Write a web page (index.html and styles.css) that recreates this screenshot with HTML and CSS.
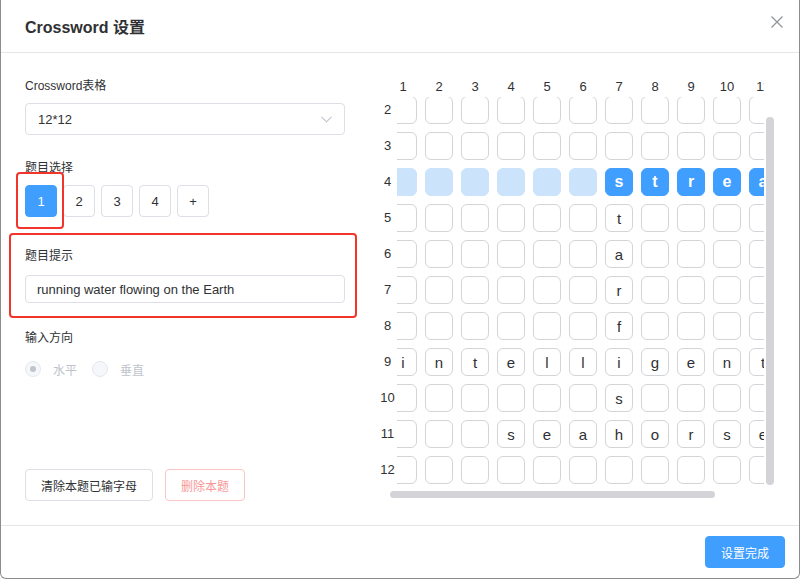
FILE: index.html
```html
<!DOCTYPE html>
<html lang="zh">
<head>
<meta charset="utf-8">
<title>Crossword 设置</title>
<link rel="stylesheet" href="styles.css">
</head>
<body>
<div class="dialog">
  <div class="header">
    <span class="title">Crossword 设置</span>
    <svg class="close" width="12" height="12" viewBox="0 0 12 12"><path d="M0.5 0.5L11.5 11.5M11.5 0.5L0.5 11.5" stroke="#909399" stroke-width="1.2" fill="none"/></svg>
  </div>
  <div class="body">
    <div class="left">
      <div class="label first">Crossword表格</div>
      <div class="select"><span>12*12</span><svg width="11" height="7" viewBox="0 0 11 7"><path d="M0.5 0.8L5.5 5.8L10.5 0.8" stroke="#c0c4cc" stroke-width="1.1" fill="none"/></svg></div>
      <div class="label l2">题目选择</div>
      <div class="nums">
        <span class="num active">1</span><span class="num">2</span><span class="num">3</span><span class="num">4</span><span class="num">+</span>
      </div>
      <div class="label l3">题目提示</div>
      <div class="input">running water flowing on the Earth</div>
      <div class="label l4">输入方向</div>
      <div class="radios">
        <span class="radio checked"><i></i>水平</span>
        <span class="radio"><i></i>垂直</span>
      </div>
      <div class="actions">
        <span class="btn">清除本题已输字母</span>
        <span class="btn danger">删除本题</span>
      </div>
    </div>
    <div class="grid-panel">
      <div class="col-head">
        <div class="corner"></div>
        <div class="col-clip">
          <div class="col-track">
            <span>1</span><span>2</span><span>3</span><span>4</span><span>5</span><span>6</span><span>7</span><span>8</span><span>9</span><span>10</span><span>11</span><span>12</span>
          </div>
        </div>
      </div>
      <div class="rows">
        <div class="row-heads">
          <div class="row-track">
            <span>1</span><span>2</span><span>3</span><span>4</span><span>5</span><span>6</span><span>7</span><span>8</span><span>9</span><span>10</span><span>11</span><span>12</span>
          </div>
        </div>
        <div class="cell-clip">
          <div class="cells">
            <!-- row 1 -->
            <span class="c"></span><span class="c"></span><span class="c"></span><span class="c"></span><span class="c"></span><span class="c"></span><span class="c"></span><span class="c"></span><span class="c"></span><span class="c"></span><span class="c"></span><span class="c"></span>
            <!-- row 2 -->
            <span class="c"></span><span class="c"></span><span class="c"></span><span class="c"></span><span class="c"></span><span class="c"></span><span class="c"></span><span class="c"></span><span class="c"></span><span class="c"></span><span class="c"></span><span class="c"></span>
            <!-- row 3 -->
            <span class="c"></span><span class="c"></span><span class="c"></span><span class="c"></span><span class="c"></span><span class="c"></span><span class="c"></span><span class="c"></span><span class="c"></span><span class="c"></span><span class="c"></span><span class="c"></span>
            <!-- row 4 -->
            <span class="c hl"></span><span class="c hl"></span><span class="c hl"></span><span class="c hl"></span><span class="c hl"></span><span class="c hl"></span><span class="c sel">s</span><span class="c sel">t</span><span class="c sel">r</span><span class="c sel">e</span><span class="c sel">a</span><span class="c sel">m</span>
            <!-- row 5 -->
            <span class="c"></span><span class="c"></span><span class="c"></span><span class="c"></span><span class="c"></span><span class="c"></span><span class="c">t</span><span class="c"></span><span class="c"></span><span class="c"></span><span class="c"></span><span class="c"></span>
            <!-- row 6 -->
            <span class="c"></span><span class="c"></span><span class="c"></span><span class="c"></span><span class="c"></span><span class="c"></span><span class="c">a</span><span class="c"></span><span class="c"></span><span class="c"></span><span class="c"></span><span class="c"></span>
            <!-- row 7 -->
            <span class="c"></span><span class="c"></span><span class="c"></span><span class="c"></span><span class="c"></span><span class="c"></span><span class="c">r</span><span class="c"></span><span class="c"></span><span class="c"></span><span class="c"></span><span class="c"></span>
            <!-- row 8 -->
            <span class="c"></span><span class="c"></span><span class="c"></span><span class="c"></span><span class="c"></span><span class="c"></span><span class="c">f</span><span class="c"></span><span class="c"></span><span class="c"></span><span class="c"></span><span class="c"></span>
            <!-- row 9 -->
            <span class="c">i</span><span class="c">n</span><span class="c">t</span><span class="c">e</span><span class="c">l</span><span class="c">l</span><span class="c">i</span><span class="c">g</span><span class="c">e</span><span class="c">n</span><span class="c">t</span><span class="c"></span>
            <!-- row 10 -->
            <span class="c"></span><span class="c"></span><span class="c"></span><span class="c"></span><span class="c"></span><span class="c"></span><span class="c">s</span><span class="c"></span><span class="c"></span><span class="c"></span><span class="c"></span><span class="c"></span>
            <!-- row 11 -->
            <span class="c"></span><span class="c"></span><span class="c"></span><span class="c">s</span><span class="c">e</span><span class="c">a</span><span class="c">h</span><span class="c">o</span><span class="c">r</span><span class="c">s</span><span class="c">e</span><span class="c"></span>
            <!-- row 12 -->
            <span class="c"></span><span class="c"></span><span class="c"></span><span class="c"></span><span class="c"></span><span class="c"></span><span class="c"></span><span class="c"></span><span class="c"></span><span class="c"></span><span class="c"></span><span class="c"></span>
          </div>
        </div>
      </div>
      <div class="vbar"></div>
      <div class="hbar"></div>
    </div>
  </div>
  <div class="footer">
    <span class="btn primary">设置完成</span>
  </div>
  <div class="mark mark-num"></div>
  <div class="mark mark-hint"></div>
</div>
</body>
</html>
```

FILE: styles.css
```css
html, body {
  margin: 0;
  padding: 0;
  background: #ffffff;
}
body {
  font-family: "Liberation Sans", "Noto Sans CJK SC", sans-serif;
  color: #303133;
  width: 800px;
  height: 579px;
  overflow: hidden;
}
.dialog {
  position: relative;
  box-sizing: border-box;
  width: 800px;
  height: 579px;
  border: 1px solid #8c8c8c;
  border-top: none;
  border-radius: 0 0 6px 6px;
  display: flex;
  flex-direction: column;
  background: #fff;
}
.header {
  height: 52px;
  border-bottom: 1px solid #e6e6e6;
  display: flex;
  justify-content: space-between;
  align-items: center;
  padding: 0 16px 0 24px;
  flex: none;
}
.title {
  font-size: 16px;
  font-weight: 600;
  color: #303133;
}
.close {
  align-self: flex-start;
  margin-top: 16px;
}
.body {
  flex: 1;
  display: flex;
  padding-left: 24px;
}
.left {
  width: 320px;
  display: flex;
  flex-direction: column;
  padding-bottom: 24px;
}
.label {
  font-size: 12px;
  line-height: 18px;
  color: #303133;
}
.label.first { margin-top: 24px; }
.select {
  margin-top: 8px;
  box-sizing: border-box;
  height: 32px;
  border: 1px solid #dcdfe6;
  border-radius: 4px;
  padding: 0 12px;
  display: flex;
  align-items: center;
  justify-content: space-between;
  font-size: 13px;
  color: #303133;
}
.label.l2 { margin-top: 24px; }
.nums {
  margin-top: 8px;
  display: flex;
  gap: 6px;
}
.num {
  box-sizing: border-box;
  width: 32px;
  height: 32px;
  border: 1px solid #dcdfe6;
  border-radius: 4px;
  display: flex;
  align-items: center;
  justify-content: center;
  font-size: 13px;
  color: #303133;
}
.num.active {
  background: #409eff;
  border-color: #409eff;
  color: #fff;
}
.label.l3 { margin-top: 30px; }
.input {
  margin-top: 10px;
  box-sizing: border-box;
  height: 28px;
  border: 1px solid #dcdfe6;
  border-radius: 4px;
  padding: 0 11px;
  display: flex;
  align-items: center;
  font-size: 13px;
  color: #303133;
}
.label.l4 { margin-top: 26px; }
.radios {
  margin-top: 13px;
  display: flex;
  align-items: center;
  height: 18px;
}
.radio {
  display: flex;
  align-items: center;
  font-size: 12px;
  color: #c0c4cc;
  margin-right: 15px;
}
.radio i {
  box-sizing: border-box;
  width: 16px;
  height: 16px;
  border-radius: 50%;
  border: 1px solid #e4e7ed;
  background: #f5f7fa;
  margin-right: 12px;
  display: flex;
  align-items: center;
  justify-content: center;
}
.radio.checked i::after {
  content: "";
  width: 6px;
  height: 6px;
  border-radius: 50%;
  background: #c0c4cc;
}
.actions {
  margin-top: auto;
  display: flex;
  gap: 12px;
}
.btn {
  box-sizing: border-box;
  height: 32px;
  padding: 0 15px;
  border: 1px solid #dcdfe6;
  border-radius: 4px;
  display: inline-flex;
  align-items: center;
  font-size: 12px;
  color: #303133;
  background: #fff;
}
.btn.danger {
  color: #f89898;
  border-color: #fbc4c4;
}
.btn.primary {
  background: #409eff;
  border-color: #409eff;
  color: #fff;
}
.grid-panel {
  position: relative;
  margin-left: 33px;
  width: 398px;
  padding-top: 24px;
}
.col-head {
  display: flex;
  height: 20px;
}
.corner {
  width: 19px;
  flex: none;
}
.col-clip {
  width: 367px;
  overflow: hidden;
}
.col-track {
  display: flex;
  gap: 8px;
  margin-left: -8px;
}
.col-track span {
  flex: none;
  width: 28px;
  text-align: center;
  font-size: 13px;
  line-height: 20px;
  color: #303133;
}
.rows {
  display: flex;
}
.row-heads {
  width: 19px;
  height: 388px;
  overflow: hidden;
  flex: none;
}
.row-track {
  margin-top: -37px;
  display: flex;
  flex-direction: column;
  gap: 8px;
}
.row-track span {
  height: 28px;
  line-height: 28px;
  text-align: center;
  font-size: 13px;
  color: #303133;
}
.cell-clip {
  width: 367px;
  height: 388px;
  overflow: hidden;
}
.cells {
  display: grid;
  grid-template-columns: repeat(12, 28px);
  grid-auto-rows: 28px;
  gap: 8px;
  margin: -37px 0 0 -8px;
}
.c {
  box-sizing: border-box;
  width: 28px;
  height: 28px;
  border: 1px solid #d4d4d8;
  border-radius: 6px;
  display: flex;
  align-items: center;
  justify-content: center;
  font-size: 15px;
  color: #303133;
}
.c.hl {
  background: #cbe4fc;
  border-color: #cbe4fc;
}
.c.sel {
  background: #409eff;
  border-color: #409eff;
  color: #fff;
  font-weight: bold;
  font-size: 16px;
}
.vbar {
  position: absolute;
  left: 388px;
  top: 64px;
  width: 8px;
  height: 368px;
  border-radius: 4px;
  background: #d3d3d8;
}
.hbar {
  position: absolute;
  left: 12px;
  top: 438px;
  width: 325px;
  height: 7px;
  border-radius: 4px;
  background: #d3d3d8;
}
.footer {
  flex: none;
  height: 52px;
  border-top: 1px solid #e6e6e6;
  display: flex;
  align-items: center;
  justify-content: flex-end;
  padding: 0 14px;
}
.mark {
  position: absolute;
  box-sizing: border-box;
  border: 2px solid #f2352b;
  border-radius: 4px;
}
.mark-num {
  left: 15px;
  top: 172px;
  width: 48px;
  height: 57px;
}
.mark-hint {
  left: 8px;
  top: 233px;
  width: 348px;
  height: 85px;
}
```
